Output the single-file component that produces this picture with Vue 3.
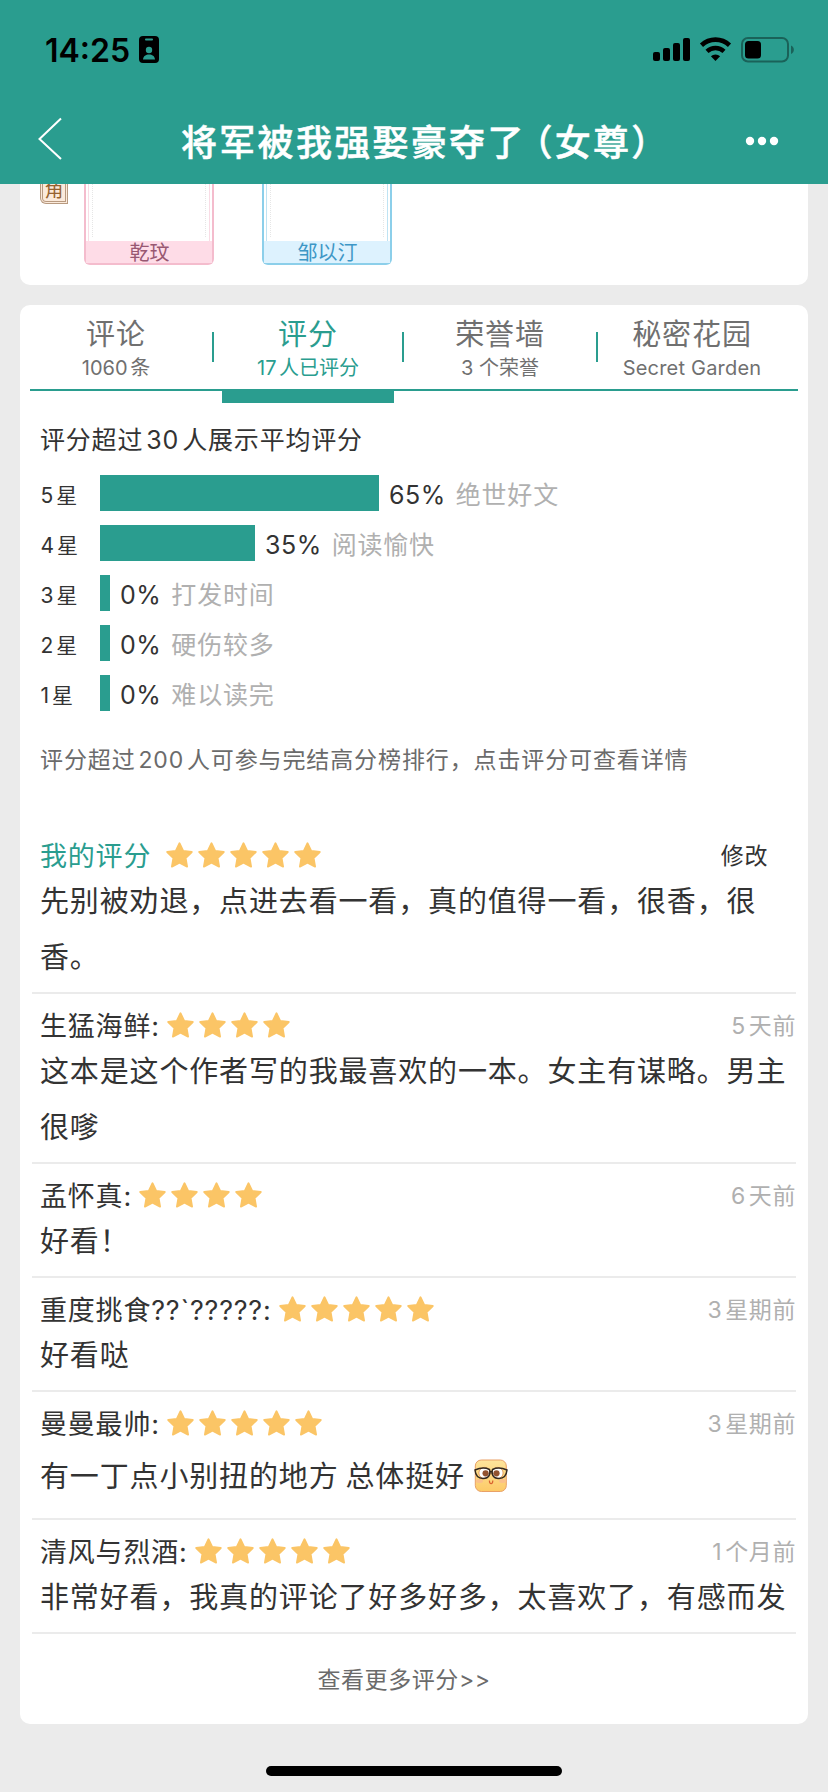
<script setup>
const tabs = [
  { title: '评论', sub: '1060条' },
  { title: '评分', sub: '17人已评分', active: true },
  { title: '荣誉墙', sub: '3 个荣誉' },
  { title: '秘密花园', sub: 'Secret Garden' },
]

// width is the bar length in px, empty rows keep a small stub
const bars = [
  { star: 5, percent: 65, label: '绝世好文', width: 279 },
  { star: 4, percent: 35, label: '阅读愉快', width: 155 },
  { star: 3, percent: 0, label: '打发时间', width: 10 },
  { star: 2, percent: 0, label: '硬伤较多', width: 10 },
  { star: 1, percent: 0, label: '难以读完', width: 10 },
]

const reviews = [
  { name: '我的评分', mine: true, stars: 5, time: '修改', text: '先别被劝退，点进去看一看，真的值得一看，很香，很\n香。' },
  { name: '生猛海鲜:', stars: 4, time: '5天前', text: '这本是这个作者写的我最喜欢的一本。女主有谋略。男主\n很嗲' },
  { name: '孟怀真:', stars: 4, time: '6天前', text: '好看！' },
  { name: '重度挑食??`?????:', stars: 5, time: '3星期前', text: '好看哒' },
  { name: '曼曼最帅:', stars: 5, time: '3星期前', text: '有一丁点小别扭的地方 总体挺好', emoji: true },
  { name: '清风与烈酒:', stars: 5, time: '1个月前', text: '非常好看，我真的评论了好多好多，太喜欢了，有感而发' },
]
</script>

<template>
  <div class="page">
    <header class="header">
      <div class="status">
        <span class="clock">14:25</span>
        <svg class="badge" width="20" height="27" viewBox="0 0 20 27">
          <rect width="20" height="27" rx="4" fill="#000" />
          <rect x="6" y="2.6" width="8" height="1.8" rx=".9" fill="#2a9d8f" />
          <circle cx="10" cy="14" r="3.2" fill="#2a9d8f" />
          <path d="M4 23.6c.4-3.6 2.800-5 6-5s5.600 1.400 6 5z" fill="#2a9d8f" />
        </svg>
        <svg class="signals" width="142" height="26" viewBox="0 0 142 26">
          <rect x="0" y="15" width="7" height="9" rx="2" />
          <rect x="10" y="11" width="7" height="13" rx="2" />
          <rect x="20" y="6" width="7" height="18" rx="2" />
          <rect x="30" y="1" width="7" height="23" rx="2" />
          <path d="M48.500 8.200a20.500 20.500 0 0 1 28 0" fill="none" stroke="#000" stroke-width="4.600" />
          <path d="M54 14.400a12.500 12.500 0 0 1 17 0" fill="none" stroke="#000" stroke-width="4.400" />
          <path d="M62.500 24l-4.600-4.700a6.500 6.500 0 0 1 9.200 0z" />
          <rect x="89" y="1" width="46" height="23.500" rx="6" fill="none" stroke="#1a6259" stroke-width="2" />
          <rect x="92" y="4" width="16" height="17.500" rx="3.500" />
          <path d="M138 8.500c3.800 1.500 3.800 7 0 8.500z" fill="#1a6259" />
        </svg>
      </div>
      <div class="nav">
        <svg class="back" width="26" height="44" viewBox="0 0 26 44">
          <path d="M24 1.500L2.500 22 24 42" fill="none" stroke="#fff" stroke-width="2" />
        </svg>
        <h1 class="title">将军被我强娶豪夺<span class="tight">了</span>（女尊）</h1>
        <svg class="more-dots" width="34" height="10" viewBox="0 0 34 10">
          <circle cx="5" cy="5" r="4.200" />
          <circle cx="17" cy="5" r="4.200" />
          <circle cx="29" cy="5" r="4.200" />
        </svg>
      </div>
    </header>

    <section class="card roles">
      <div class="role-tag"><span>角</span></div>
      <div class="role pink">
        <div class="portrait"><i></i></div>
        <div class="role-name">乾玟</div>
      </div>
      <div class="role blue">
        <div class="portrait"><i></i></div>
        <div class="role-name">邹以汀</div>
      </div>
    </section>

    <section class="card ratings">
      <nav class="tabs">
        <div v-for="t in tabs" :key="t.title" :class="['tab', { active: t.active }]">
          <div class="tab-title">{{ t.title }}</div>
          <div class="tab-sub">{{ t.sub }}</div>
        </div>
      </nav>
      <div class="tab-line"></div>
      <div class="tab-marker"></div>

      <div class="summary">评分超过30人展示平均评分</div>
      <div class="bars">
        <div v-for="b in bars" :key="b.star" class="bar-row">
          <span class="bar-star">{{ b.star }}星</span>
          <span class="bar" :style="{ width: b.width + 'px' }"></span>
          <span class="bar-percent">{{ b.percent }}%</span>
          <span class="bar-label">{{ b.label }}</span>
        </div>
      </div>
      <div class="note">评分超过200人可参与完结高分榜排行，点击评分可查看详情</div>

      <div class="reviews">
        <article v-for="r in reviews" :key="r.name" :class="['review', { mine: r.mine, tall: r.emoji }]">
          <div class="review-head">
            <span class="review-name">{{ r.name }}</span>
            <span class="stars">
              <svg v-for="n in r.stars" :key="n" width="27" height="26" viewBox="0 0 27 26">
                <path d="M13.500 1.200L17.200 8.900 25.800 10 19.600 16 21.100 24.600 13.500 20.600 5.900 24.600 7.400 16 1.200 10 9.800 8.900z" fill="#fbc566" stroke="#fbc566" stroke-width="1.800" stroke-linejoin="round" />
              </svg>
            </span>
            <span class="review-time">{{ r.time }}</span>
          </div>
          <div class="review-text">
            <span>{{ r.text }}</span>
            <svg v-if="r.emoji" class="emoji" width="34" height="34" viewBox="0 0 34 34">
              <defs>
                <linearGradient id="face" x1="0" y1="0" x2="0" y2="1">
                  <stop offset="0" stop-color="#fee59c" />
                  <stop offset="1" stop-color="#fdca67" />
                </linearGradient>
              </defs>
              <rect x="1.300" y="1" width="31" height="31.500" rx="6" fill="url(#face)" stroke="#e9a167" />
              <ellipse cx="5.500" cy="22" rx="3.500" ry="2" fill="#fbc08a" />
              <ellipse cx="28.500" cy="22" rx="3.500" ry="2" fill="#fbc08a" />
              <circle cx="10.500" cy="14" r="5.600" fill="#fff" stroke="#d98b4a" stroke-width=".8" />
              <circle cx="23.500" cy="14" r="5.600" fill="#fff" stroke="#d98b4a" stroke-width=".8" />
              <circle cx="11.600" cy="14.300" r="3.100" fill="#925330" />
              <circle cx="22.500" cy="14.300" r="3.100" fill="#925330" />
              <path d="M1 11Q9 7.500 15.500 10.500C16.800 14 15.500 19.500 9 19.500 3 19.500 1.500 16 1 11zM33 11Q25 7.500 18.500 10.500C17.200 14 18.500 19.500 25 19.500 31 19.500 32.500 16 33 11zM15.500 12.500h3" fill="none" stroke="#33291f" stroke-width="1.500" />
              <path d="M15.400 21.500c0 4.200 3.400 4.200 3.400 0" fill="none" stroke="#d9622f" stroke-width="1.200" />
            </svg>
          </div>
        </article>
      </div>
      <div class="see-more">查看更多评分&gt;&gt;</div>
    </section>

    <div class="home-bar"></div>
  </div>
</template>

<style>
body {
  background: #ebebeb;
}
</style>

<style scoped>
.page {
  width: 828px;
  height: 1792px;
  overflow: hidden;
  background: #ebebeb;
  color: #333;
  font-family: Inter, "Noto Sans CJK SC", sans-serif;
  text-autospace: normal;
}
.page svg {
  display: block;
  flex: none;
}

/* Header */
.header {
  height: 184px;
  background: #2a9d8f;
}
.status {
  display: flex;
  align-items: center;
  height: 99px;
  padding: 0 33px 0 45px;
}
.clock {
  width: 94px;
  padding-top: 1px;
  color: #000;
  font-size: 32px;
  font-weight: 600;
}
.signals {
  margin-left: auto;
}
.nav {
  display: flex;
  align-items: center;
  height: 84px;
  padding: 0 49px 0 37px;
}
.back {
  margin-top: -4px;
}
.title {
  flex: 1;
  margin: -3px 0 0 118px;
  color: #fff;
  font-size: 36px;
  font-weight: 500;
  letter-spacing: 2.3px;
  white-space: nowrap;
  -webkit-text-stroke: 0.5px #fff;
}
/* the full-width bracket brings its own space */
.tight {
  letter-spacing: -7px;
}
.more-dots {
  fill: #fff;
}

/* Cards */
.card {
  width: 788px;
  margin: 0 auto;
  background: #fff;
}
.roles {
  display: flex;
  align-items: flex-start;
  height: 101px;
  border-radius: 0 0 10px 10px;
}
.role-tag {
  display: flex;
  align-items: flex-end;
  justify-content: center;
  width: 28px;
  height: 20px;
  margin: 0 16px 0 20px;
  box-sizing: border-box;
  overflow: hidden;
  border: 3px double #b89a80;
  border-top: 0;
  border-bottom-left-radius: 6px;
  background: #fbeadb;
  color: #96622f;
  font-size: 19px;
  line-height: 20px;
}
.role {
  width: 130px;
  height: 81px;
  margin-right: 48px;
  box-sizing: border-box;
  border: 2px solid #f4bccd;
  border-top: 0;
  border-radius: 0 0 6px 6px;
}
.portrait {
  height: 57px;
  margin: 0 2px;
  box-sizing: border-box;
  border: 1px solid #f9dce5;
  border-width: 0 1px;
}
.portrait i {
  display: block;
  height: 53px;
  margin: 0 3px;
  border: 1px dotted #e6e6e6;
  border-width: 0 1px;
}
.role-name {
  height: 22px;
  padding-left: 1px;
  background: #fedce7;
  color: #985872;
  font-size: 20px;
  line-height: 24px;
  text-align: center;
}
.role.blue {
  border-color: #8ccfea;
}
.blue .portrait {
  border-color: #bfe3f3;
}
.blue .role-name {
  background: #ddf2fe;
  color: #3e97c6;
}

/* Tabs */
.ratings {
  height: 1419px;
  margin-top: 20px;
  border-radius: 10px;
}
.tabs {
  display: flex;
  height: 84px;
}
.tab {
  position: relative;
  width: 192px;
  color: #707070;
  text-align: center;
}
.tab.active {
  color: #2a9d8f;
}
.tab.active::before,
.tab.active::after,
.tab:last-child::before {
  content: "";
  position: absolute;
  top: 27px;
  left: 0;
  width: 2px;
  height: 30px;
  background: #2a9d8f;
}
.tab.active::after {
  left: auto;
  right: 0;
}
.tab-title {
  height: 39px;
  padding-top: 10px;
  font-size: 29px;
  line-height: 40px;
  letter-spacing: 0.9px;
}
.tab-sub {
  font-size: 20px;
  line-height: 28px;
}
.tab:last-child .tab-sub {
  letter-spacing: 0.2px;
}
.tab-line {
  height: 2px;
  margin: 0 10px;
  background: #2a9d8f;
}
.tab-marker {
  width: 172px;
  height: 12px;
  margin-left: 202px;
  background: #2a9d8f;
}

/* Score summary */
.summary {
  padding: 19px 20px 0;
  font-size: 25px;
  line-height: 36px;
  letter-spacing: 0.8px;
}
.bars {
  display: flex;
  flex-direction: column;
  gap: 14px;
  padding: 17px 20px 0;
}
.bar-row {
  display: flex;
  align-items: center;
  height: 36px;
  font-size: 25px;
}
.bar-star {
  width: 59.5px;
  padding: 2px 0 0 0.5px;
  font-size: 21px;
  letter-spacing: 0.3px;
}
.bar {
  height: 36px;
  background: #2a9d8f;
}
.bar-percent {
  margin-left: 10px;
  padding-top: 3px;
  letter-spacing: 0.5px;
}
.bar-label {
  margin-left: 10px;
  color: #b0b0b0;
  letter-spacing: 0.8px;
}
.note {
  padding: 31px 20px 46px;
  color: #6b6b6b;
  font-size: 23px;
  line-height: 36px;
  letter-spacing: 0.88px;
}

/* Reviews */
.reviews {
  margin: 0 12px;
}
.review {
  padding: 15px 0 6px 8px;
  border-bottom: 2px solid #ebebeb;
}
.review-head {
  display: flex;
  align-items: center;
  height: 35px;
  line-height: 34px;
}
.review-name {
  font-size: 27px;
  letter-spacing: 0.8px;
  white-space: nowrap;
}
.mine .review-name {
  width: 118px;
  color: #2a9d8f;
}
.stars {
  display: flex;
  gap: 5px;
  margin: -3px 0 0 7.5px;
}
.review-time {
  margin: -2px 0 0 auto;
  color: #b0b0b0;
  font-size: 23px;
  letter-spacing: 0.6px;
}
.mine .review-time {
  padding-right: 28px;
  color: #333;
}
.review-text {
  display: flex;
  align-items: center;
  font-size: 29px;
  line-height: 56px;
  letter-spacing: 0.85px;
  word-spacing: -2px;
  white-space: pre;
}
.tall .review-text {
  height: 70px;
}
.emoji {
  margin: -2px 0 0 9px;
}
.see-more {
  padding-top: 28px;
  color: #6b6b6b;
  font-size: 23px;
  line-height: 36px;
  letter-spacing: 0.6px;
  padding-right: 20px;
  text-align: center;
}

.home-bar {
  width: 296px;
  height: 10px;
  margin: 42px auto 0;
  border-radius: 5px;
  background: #000;
}
</style>
